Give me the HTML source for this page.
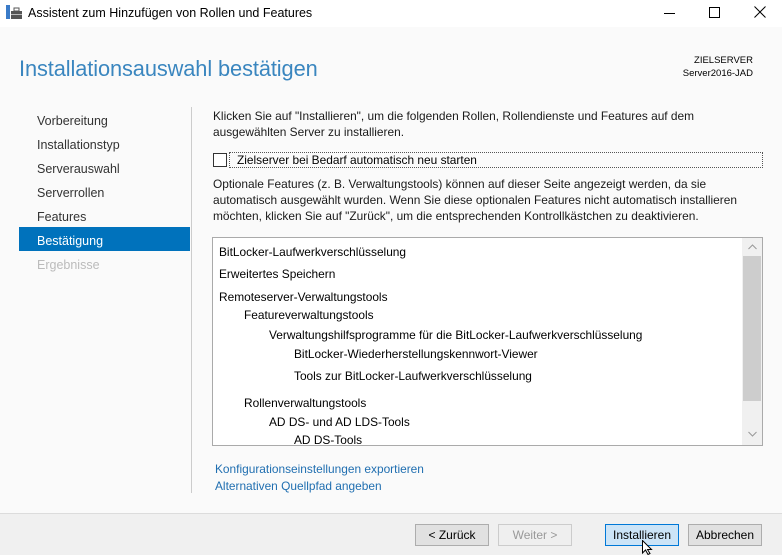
<!DOCTYPE html>
<html><head><meta charset="utf-8"><style>
*{margin:0;padding:0;box-sizing:border-box}
body{width:782px;height:555px;background:#fafafa;font-family:"Liberation Sans",sans-serif;font-size:11.9px;color:#000;position:relative;overflow:hidden}
.a{position:absolute;white-space:nowrap}
.nav{position:absolute;left:37px;font-size:12.5px;color:#333}
.btn{position:absolute;top:524px;width:74px;height:22px;border:1px solid #adadad;background:#e1e1e1;text-align:center;line-height:20px;font-size:12px}
.li{position:absolute;font-size:11.9px;white-space:nowrap}
</style></head><body>
<div class="a" style="left:0;top:0;width:782px;height:27px;background:#fff"></div>
<svg class="a" style="left:6px;top:5px" width="16" height="14" viewBox="0 0 16 14"><rect x="0" y="0" width="4" height="14" fill="#3a7bc8"/><rect x="5" y="6" width="11" height="8" fill="#555"/><rect x="8" y="3" width="5" height="3" fill="none" stroke="#555" stroke-width="1"/><rect x="5" y="9" width="11" height="1" fill="#bbb"/></svg>
<div class="a" style="left:28px;top:6px;font-size:12.5px">Assistent zum Hinzufügen von Rollen und Features</div>
<div class="a" style="left:664px;top:13px;width:11px;height:1px;background:#000"></div>
<div class="a" style="left:709px;top:7px;width:11px;height:11px;border:1px solid #000"></div>
<svg class="a" style="left:754px;top:6px" width="12" height="12"><path d="M0.5 0.5L11.5 11.5M11.5 0.5L0.5 11.5" stroke="#000" stroke-width="1"/></svg>
<div class="a" style="left:19px;top:56px;font-size:21.8px;color:#3a86bf;letter-spacing:-0.1px">Installationsauswahl bestätigen</div>
<div class="a" style="right:29px;top:54px;font-size:9.5px;text-align:right;line-height:13px">ZIELSERVER<br>Server2016-JAD</div>
<div class="nav" style="top:114px">Vorbereitung</div>
<div class="nav" style="top:138px">Installationstyp</div>
<div class="nav" style="top:162px">Serverauswahl</div>
<div class="nav" style="top:186px">Serverrollen</div>
<div class="nav" style="top:210px">Features</div>
<div class="a" style="left:19px;top:227px;width:171px;height:24px;background:#0072bc"></div>
<div class="nav" style="top:234px;color:#fff">Bestätigung</div>
<div class="nav" style="top:258px;color:#bbb">Ergebnisse</div>
<div class="a" style="left:191px;top:107px;width:1px;height:386px;background:#ccc"></div>
<div class="a" style="left:213px;top:108px;line-height:16px;color:#1a1a1a">Klicken Sie auf "Installieren", um die folgenden Rollen, Rollendienste und Features auf dem<br>ausgewählten Server zu installieren.</div>
<div class="a" style="left:213px;top:153px;width:14px;height:14px;border:1px solid #333;background:#fff"></div>
<div class="a" style="left:229px;top:152px;width:534px;height:16px;border:1px dotted #555"></div>
<div class="a" style="left:237px;top:153px">Zielserver bei Bedarf automatisch neu starten</div>
<div class="a" style="left:213px;top:176px;line-height:16px;color:#1a1a1a">Optionale Features (z. B. Verwaltungstools) können auf dieser Seite angezeigt werden, da sie<br>automatisch ausgewählt wurden. Wenn Sie diese optionalen Features nicht automatisch installieren<br>möchten, klicken Sie auf "Zurück", um die entsprechenden Kontrollkästchen zu deaktivieren.</div>
<div class="a" style="left:212px;top:237px;width:551px;height:209px;border:1px solid #aaa;background:#fff;overflow:hidden">
<div class="a" style="left:529px;top:0;width:20px;height:207px;background:#f0f0f0"></div>
<div class="a" style="left:530px;top:18px;width:18px;height:145px;background:#cdcdcd"></div>
<svg class="a" style="left:535px;top:6px" width="9" height="6"><path d="M0.5 5L4.5 1L8.5 5" fill="none" stroke="#999"/></svg>
<svg class="a" style="left:535px;top:193px" width="9" height="6"><path d="M0.5 1L4.5 5L8.5 1" fill="none" stroke="#999"/></svg>
<div class="li" style="left:6px;top:7px">BitLocker-Laufwerkverschlüsselung</div>
<div class="li" style="left:6px;top:29px">Erweitertes Speichern</div>
<div class="li" style="left:6px;top:52px">Remoteserver-Verwaltungstools</div>
<div class="li" style="left:31px;top:70px">Featureverwaltungstools</div>
<div class="li" style="left:56px;top:90px">Verwaltungshilfsprogramme für die BitLocker-Laufwerkverschlüsselung</div>
<div class="li" style="left:81px;top:109px">BitLocker-Wiederherstellungskennwort-Viewer</div>
<div class="li" style="left:81px;top:131px">Tools zur BitLocker-Laufwerkverschlüsselung</div>
<div class="li" style="left:31px;top:158px">Rollenverwaltungstools</div>
<div class="li" style="left:56px;top:177px">AD DS- und AD LDS-Tools</div>
<div class="li" style="left:81px;top:195px">AD DS-Tools</div>
</div>
<div class="a" style="left:215px;top:462px;color:#1f6eb0">Konfigurationseinstellungen exportieren</div>
<div class="a" style="left:215px;top:479px;color:#1f6eb0">Alternativen Quellpfad angeben</div>
<div class="a" style="left:0;top:513px;width:782px;height:42px;background:#f0f0f0;border-top:1px solid #dcdcdc"></div>
<div class="btn" style="left:415px">&lt; Zurück</div>
<div class="btn" style="left:498px;color:#999;border-color:#ccc;background:#efefef">Weiter &gt;</div>
<div class="btn" style="left:605px;background:#cce4f7;border-color:#0078d7">Installieren</div>
<div class="btn" style="left:688px">Abbrechen</div>
<svg class="a" style="left:642px;top:540px" width="12" height="15"><path d="M0.5 0.5V13L3.5 10L6 14.5L8 13.5L5.5 9.5H9.5Z" fill="#fff" stroke="#000"/></svg>
</body></html>
